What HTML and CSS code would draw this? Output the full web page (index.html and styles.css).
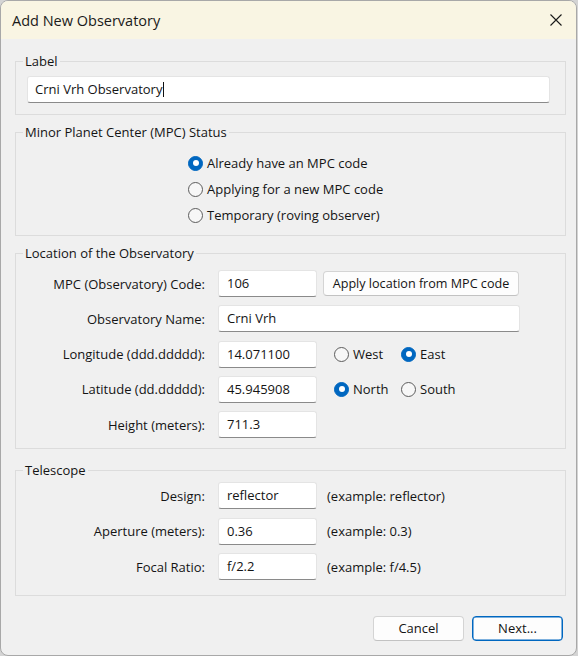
FILE: index.html
```html
<!DOCTYPE html>
<html lang="en">
<head>
  <meta charset="UTF-8">
  <meta name="viewport" content="width=device-width, initial-scale=1">
  <title>Add New Observatory</title>
  <link rel="stylesheet" href="styles.css">
</head>
<body>
  <div class="dialog">
    <div class="titlebar">
      <span class="title">Add New Observatory</span>
      <svg class="close" viewBox="0 0 12 12" width="12" height="12"><path d="M0.5 0.5L11.5 11.5M11.5 0.5L0.5 11.5" stroke="#1a1a1a" stroke-width="1.1" fill="none"/></svg>
    </div>

    <div class="content">
      <fieldset class="group group-label">
        <legend>Label</legend>
        <div class="field field-label">Crni Vrh Observatory<span class="caret"></span></div>
      </fieldset>

      <fieldset class="group group-status">
        <legend>Minor Planet Center (MPC) Status</legend>
        <div class="radio-list">
          <label class="option"><span class="radio checked"></span>Already have an MPC code</label>
          <label class="option"><span class="radio"></span>Applying for a new MPC code</label>
          <label class="option"><span class="radio"></span>Temporary (roving observer)</label>
        </div>
      </fieldset>

      <fieldset class="group group-location">
        <legend>Location of the Observatory</legend>
        <div class="form-grid">
          <span class="lbl">MPC (Observatory) Code:</span>
          <div class="field">106</div>
          <button class="btn btn-apply" type="button">Apply location from MPC code</button>

          <span class="lbl">Observatory Name:</span>
          <div class="field field-name">Crni Vrh</div>

          <span class="lbl">Longitude (ddd.ddddd):</span>
          <div class="field">14.071100</div>
          <div class="pair">
            <label class="option"><span class="radio"></span>West</label>
            <label class="option"><span class="radio checked"></span>East</label>
          </div>

          <span class="lbl">Latitude (dd.ddddd):</span>
          <div class="field">45.945908</div>
          <div class="pair">
            <label class="option"><span class="radio checked"></span>North</label>
            <label class="option"><span class="radio"></span>South</label>
          </div>

          <span class="lbl">Height (meters):</span>
          <div class="field">711.3</div>
        </div>
      </fieldset>

      <fieldset class="group group-telescope">
        <legend>Telescope</legend>
        <div class="form-grid scope-grid">
          <span class="lbl">Design:</span>
          <div class="field">reflector</div>
          <span class="hint">(example: reflector)</span>

          <span class="lbl">Aperture (meters):</span>
          <div class="field">0.36</div>
          <span class="hint">(example: 0.3)</span>

          <span class="lbl">Focal Ratio:</span>
          <div class="field">f/2.2</div>
          <span class="hint">(example: f/4.5)</span>
        </div>
      </fieldset>

      <div class="actions">
        <button class="btn" type="button">Cancel</button>
        <button class="btn btn-default" type="button">Next...</button>
      </div>
    </div>
  </div>
</body>
</html>
```

FILE: styles.css
```css
*, *::before, *::after { box-sizing: border-box; }
body { margin: 0; background: #d4d4d4; font-family: "Segoe UI", "Open Sans", sans-serif; font-size: 13px; color: #141414; }

.dialog { width: 577px; height: 656px; background: #f0f0f0; border: 1px solid #a8a8a8; border-radius: 8px; overflow: hidden; display: flex; flex-direction: column; }
.titlebar { height: 38px; flex: none; background: #f9f5e3; display: flex; align-items: center; justify-content: space-between; padding: 0 14px 0 11px; }
.title { font-size: 14.5px; color: #1a1a1a; }
.close { display: block; }

.content { padding: 12px 11px 0 14px; display: flex; flex-direction: column; }

.group { margin: 0; padding: 0; min-width: 0; width: 551px; border: 1px solid #dcdcdc; }
.group legend { margin-left: 7px; padding: 0 2px; line-height: 20px; }
.group-label { padding: 5px 0 11px 0; }
.group-status { margin-top: 7px; padding: 8px 0 7px 0; }
.group-location { margin-top: 7px; padding: 7px 0 10px 0; }
.group-telescope { margin-top: 11px; padding: 2px 0 15px 0; }

.field { height: 27px; width: 99px; display: flex; align-items: center; padding: 0 8px 1px; background: #fff; border: 1px solid #e4e4e4; border-bottom-color: #8a8a8a; border-radius: 3px; white-space: nowrap; }
.field-label { width: 523px; margin-left: 11px; padding-left: 7px; }
.field-name { width: 302px; grid-column: 2 / 4; }
.caret { display: inline-block; width: 1px; height: 15px; background: #111; margin-left: 1px; }

.radio-list { display: flex; flex-direction: column; padding-left: 172px; }
.radio-list .option { height: 26px; }
.option { display: flex; align-items: center; gap: 4px; white-space: nowrap; }
.radio { width: 15px; height: 15px; flex: none; border-radius: 50%; border: 1px solid #5c5c5c; background: #f7f7f7; position: relative; }
.radio.checked { border-color: #0067c0; background: #0067c0; }
.radio.checked::after { content: ''; position: absolute; left: 50%; top: 50%; width: 6px; height: 6px; margin: -3px 0 0 -3px; border-radius: 50%; background: #fff; }

.form-grid { display: grid; grid-template-columns: 202px 99px auto; grid-auto-rows: 27px; row-gap: 8.25px; align-items: center; }
.scope-grid { row-gap: 8.5px; }
.lbl { text-align: right; padding-right: 13px; white-space: nowrap; }
.pair { display: flex; margin-left: 17px; }
.pair .option { width: 67px; }
.hint { margin-left: 10px; white-space: nowrap; }

.btn { font: inherit; color: #141414; height: 25px; padding: 0 0 1px; background: #fdfdfd; border: 1px solid #d4d4d4; border-bottom-color: #c2c2c2; border-radius: 4px; }
.btn-apply { justify-self: start; width: 196px; margin-left: 6px; font-size: 12.6px; }

.actions { display: flex; justify-content: flex-end; gap: 8px; margin-top: 20px; padding-right: 2px; }
.actions .btn { width: 91px; }
.btn-default { border-color: #0067c0; box-shadow: inset 0 0 0 0.5px #0067c0; }
```
